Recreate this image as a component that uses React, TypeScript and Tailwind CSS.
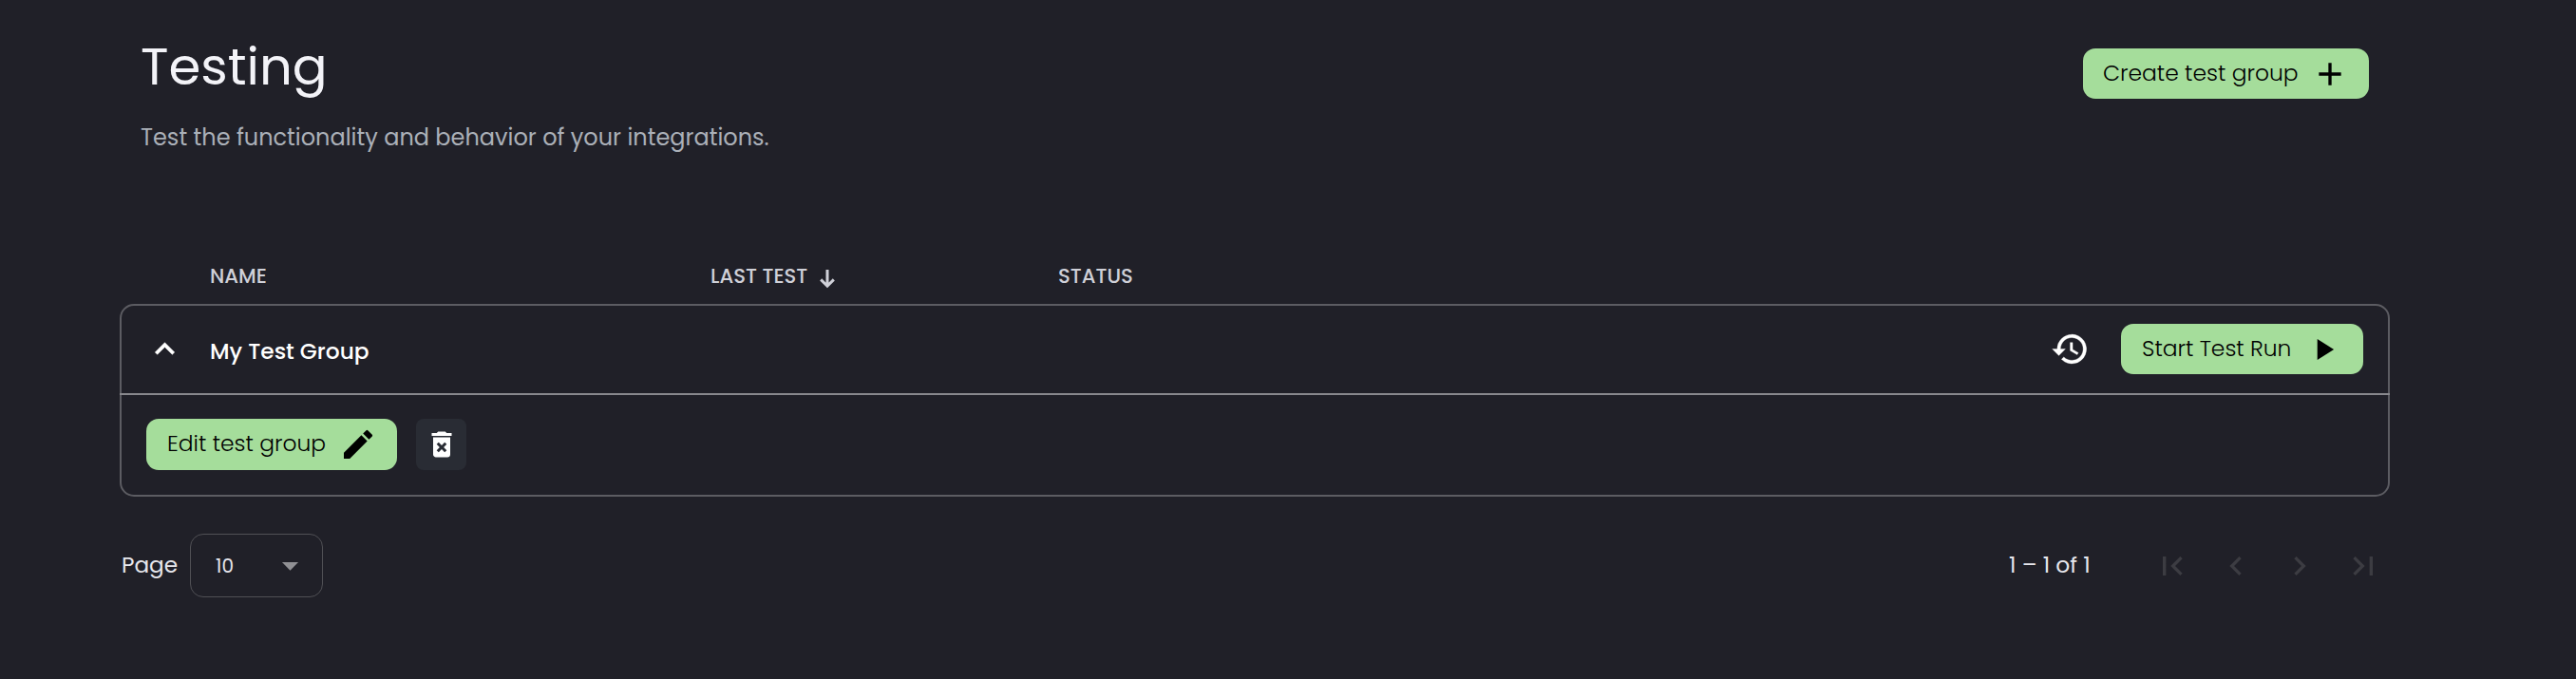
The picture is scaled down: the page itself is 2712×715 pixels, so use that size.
import type { ReactNode } from "react";

const green = "flex items-center rounded-[13px] bg-[#a5dd9b] font-light text-black";
const greenText = "pb-[2px] pl-[1px] text-left text-[23.4px]";

function Icon({ d, className }: { d: string; className: string }) {
  return (
    <svg viewBox="0 0 24 24" fill="currentColor" className={"shrink-0 " + className}>
      <path d={d} />
    </svg>
  );
}

function Label({ children, className }: { children: ReactNode; className: string }) {
  return <span className={"block shrink-0 whitespace-nowrap " + className}>{children}</span>;
}

export default function App() {
  return (
    <div className="h-[715px] w-[2712px] overflow-hidden bg-[#202028] pl-[126px] pt-[40px] font-[Poppins,Inter,sans-serif] text-white">
      <header className="flex h-[240px] w-[2368px] items-start justify-between pl-[22px]">
        <div>
          <h1 className="h-[80px] text-[54.5px] leading-[60px] text-[#f3f3f8]">
            <Label className="">Testing</Label>
          </h1>
          <Label className="text-[24px] leading-[50px] text-[#abb0b8]">
            Test the functionality and behavior of your integrations.
          </Label>
        </div>
        <button className={green + " mt-[11px] h-[53px] w-[301px] pl-[20px]"}>
          <Label className={greenText + " w-[220px]"}>Create test group</Label>
          <Icon className="h-[40px] w-[40px]" d="M19 13h-6v6h-2v-6H5v-2h6V5h2v6h6v2z" />
        </button>
      </header>

      <div className="flex h-[40px] items-start pl-[95px] text-[21.2px] leading-[22px] font-medium text-[#cfd0d8]">
        <Label className="w-[527px]">NAME</Label>
        <div className="flex w-[366px] gap-[12px]">
          <Label className="w-[103px]">LAST TEST</Label>
          <svg viewBox="0 0 16 20" className="mt-[4px] h-[20px] w-[16px]" fill="none" stroke="currentColor" strokeWidth="3">
            <path d="M8 0v17M1.2 10.4L8 17.2l6.8-6.8" />
          </svg>
        </div>
        <Label className="">STATUS</Label>
      </div>

      <section className="h-[203px] w-[2390px] rounded-[15px] border-2 border-[#5c5c62]">
        <div className="-mx-[2px] flex h-[94px] items-center border-b-2 border-[#88888d] pb-[1px]">
          <Icon className="ml-[27px] h-[41px] w-[41px] stroke-current stroke-[0.3]" d="M12 8l-6 6 1.41 1.41L12 10.83l4.59 4.58L18 14z" />
          <Label className="ml-[27px] pt-[5px] text-[23.3px] font-medium">My Test Group</Label>
          <Icon className="ml-auto h-[41px] w-[41px] stroke-current stroke-[0.2]" d="M13 3a9 9 0 0 0-9 9H1l3.89 3.89.07.14L9 12H6a7 7 0 1 1 2.06 4.94l-1.42 1.42A9 9 0 1 0 13 3zm-1 5v5l4.28 2.54.72-1.21-3.5-2.08V8H12z" />
          <button className={green + " ml-[33px] mr-[28px] h-[53px] w-[255px] pl-[21px]"}>
            <Label className={greenText + " w-[173px]"}>Start Test Run</Label>
            <Icon className="h-[38px] w-[38px]" d="M8 5v14l11-7z" />
          </button>
        </div>
        <div className="flex h-[105px] items-center gap-[20px] pb-[1px] pl-[26px]">
          <button className={green + " h-[54px] w-[264px] pl-[21px]"}>
            <Label className={greenText + " w-[182px]"}>Edit test group</Label>
            <Icon className="h-[40px] w-[40px]" d="M3 17.25V21h3.75L17.81 9.94l-3.75-3.75L3 17.25zM20.9 6.85a.8.8 0 0 0 0-1L18.15 3.1a.8.8 0 0 0-1 0l-2.02 2.02 3.75 3.75 2.02-2.02z" />
          </button>
          <button className="flex h-[54px] w-[53px] items-center justify-center rounded-[8px] bg-[#292c34]">
            <Icon className="h-[36px] w-[36px]" d="M6 19c0 1.1.9 2 2 2h8a2 2 0 0 0 2-2V7H6v12zm2.46-7.12 1.41-1.41L12 12.59l2.12-2.12 1.41 1.41L13.41 14l2.12 2.12-1.41 1.41L12 15.41l-2.12 2.12-1.41-1.41L10.59 14l-2.13-2.12zM15.5 4l-1-1h-5l-1 1H5v2h14V4z" />
          </button>
        </div>
      </section>

      <footer className="mt-[39px] flex h-[67px] w-[2390px] items-center text-[#e6e6ec]">
        <Label className="w-[74px] pl-[2px] text-[23.2px]">Page</Label>
        <div className="flex h-[67px] w-[140px] items-center rounded-[14px] border border-[#505055] pl-[26px]">
          <Label className="w-[58px] text-[20px]">10</Label>
          <Icon className="h-[41px] w-[41px] text-[#909094]" d="M7 10l5 5 5-5z" />
        </div>
        <Label className="ml-auto w-[152px] text-[23.3px]">1 – 1 of 1</Label>
        <div className="flex items-center gap-[27px] pr-[8px] text-[#3c3c42]">
          <Icon className="h-[40px] w-[40px]" d="M18.41 16.59L13.82 12l4.59-4.59L17 6l-6 6 6 6zM6 6h2v12H6z" />
          <Icon className="h-[40px] w-[40px]" d="M15.41 7.41L14 6l-6 6 6 6 1.41-1.41L10.83 12z" />
          <Icon className="h-[40px] w-[40px]" d="M10 6L8.59 7.41 13.17 12l-4.58 4.59L10 18l6-6z" />
          <Icon className="h-[40px] w-[40px]" d="M5.59 7.41L10.18 12l-4.59 4.59L7 18l6-6-6-6zM16 6h2v12h-2z" />
        </div>
      </footer>
    </div>
  );
}
